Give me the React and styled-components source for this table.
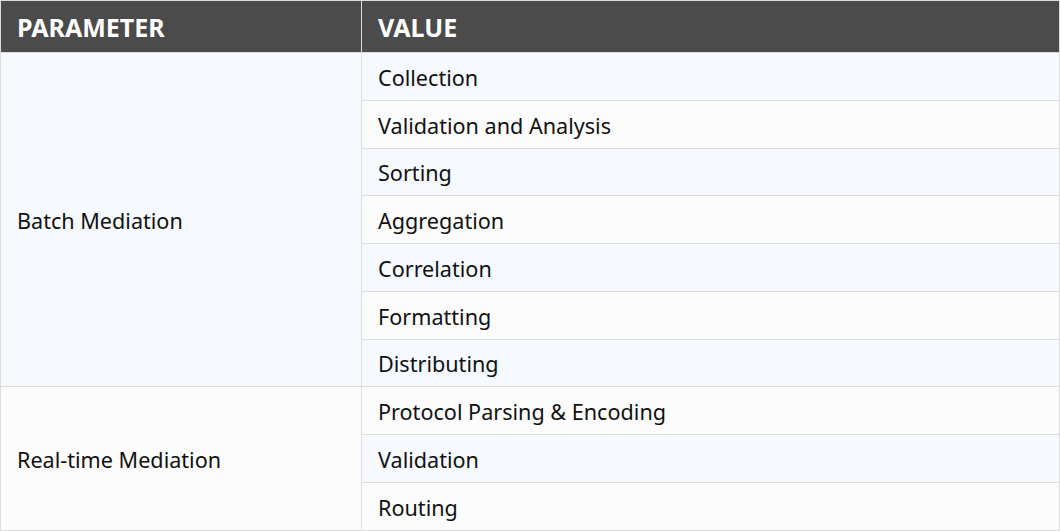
import React from "react";
import styled, { createGlobalStyle } from "styled-components";

const Global = createGlobalStyle`
  html, body { margin: 0; padding: 0; background: #ffffff; }
  body { font-family: "Noto Sans", "Open Sans", sans-serif; color: #111; }
`;

const Table = styled.table`
  width: 1060px;
  border-collapse: collapse;
  border: 1px solid #dcdcdc;
  table-layout: fixed;
`;

const HeadRow = styled.tr`
  height: 52px;
`;

const HeadCell = styled.th`
  background: #4b4b4b;
  color: #ffffff;
  text-align: left;
  font-weight: 700;
  font-size: 25px;
  padding: 0 16px;
  border: 1px solid #dcdcdc;
  border-top: none;
  border-bottom: none;
  width: ${(p) => p.$w || "auto"};
  box-sizing: border-box;
`;

const Row = styled.tr`
  height: 47.75px;
  background: ${(p) => (p.$alt ? "#f6f9fe" : "#fcfcfc")};
`;

const Cell = styled.td`
  font-size: 21.6px;
  padding: 2px 16px 0;
  border: 1px solid #dcdcdc;
  vertical-align: middle;
  color: #111;
`;

const groups = [
  {
    name: "Batch Mediation",
    values: [
      "Collection",
      "Validation and Analysis",
      "Sorting",
      "Aggregation",
      "Correlation",
      "Formatting",
      "Distributing",
    ],
  },
  {
    name: "Real-time Mediation",
    values: ["Protocol Parsing & Encoding", "Validation", "Routing"],
  },
];

export default function App() {
  let idx = 0;
  return (
    <>
      <Global />
      <Table>
        <thead>
          <HeadRow>
            <HeadCell $w="361px">PARAMETER</HeadCell>
            <HeadCell>VALUE</HeadCell>
          </HeadRow>
        </thead>
        <tbody>
          {groups.map((g) =>
            g.values.map((v, i) => {
              const alt = idx % 2 === 0;
              idx += 1;
              return (
                <Row key={g.name + v} $alt={alt}>
                  {i === 0 && <Cell rowSpan={g.values.length}>{g.name}</Cell>}
                  <Cell>{v}</Cell>
                </Row>
              );
            })
          )}
        </tbody>
      </Table>
    </>
  );
}
